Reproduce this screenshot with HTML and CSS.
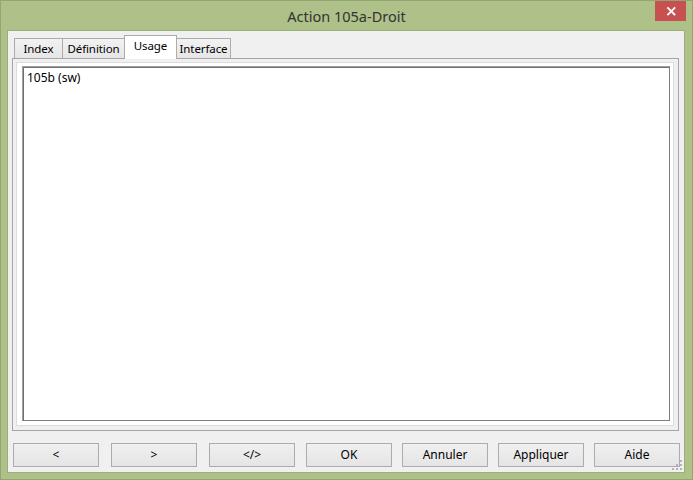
FILE: index.html
```html
<!DOCTYPE html>
<html lang="fr">
<head>
<meta charset="utf-8">
<title>Action 105a-Droit</title>
<link rel="stylesheet" href="styles.css">
</head>
<body>
<div class="window">
  <div class="titlebar">
    <span class="spacer"></span>
    <span class="title">Action 105a-Droit</span>
    <span class="close" aria-label="Fermer">
      <svg width="31" height="20" viewBox="0 0 31 20"><path d="M13 7 L19.5 13.5 M19.5 7 L13 13.5" stroke="#fff" stroke-width="1.8" fill="none" stroke-linecap="square"/></svg>
    </span>
  </div>
  <div class="client">
    <div class="tabs">
      <div class="tab t-index">Index</div>
      <div class="tab t-def">Définition</div>
      <div class="tab t-usage selected">Usage</div>
      <div class="tab t-iface">Interface</div>
    </div>
    <div class="panel">
      <div class="frame">
        <div class="listbox">
          <div class="item">105b (sw)</div>
        </div>
      </div>
    </div>
    <div class="buttons">
      <button class="btn">&lt;</button>
      <button class="btn">&gt;</button>
      <button class="btn">&lt;/&gt;</button>
      <button class="btn">OK</button>
      <button class="btn">Annuler</button>
      <button class="btn">Appliquer</button>
      <button class="btn">Aide</button>
    </div>
    <svg class="grip" width="12" height="12" viewBox="0 0 12 12">
      <g fill="#b4b4b4">
        <rect x="9" y="1" width="2" height="2"/>
        <rect x="9" y="5" width="2" height="2"/>
        <rect x="5" y="5" width="2" height="2"/>
        <rect x="9" y="9" width="2" height="2"/>
        <rect x="5" y="9" width="2" height="2"/>
        <rect x="1" y="9" width="2" height="2"/>
      </g>
    </svg>
  </div>
</div>
</body>
</html>
```
FILE: styles.css
```css
* { box-sizing: border-box; }
html, body { margin: 0; padding: 0; }
body {
  width: 693px;
  height: 480px;
  overflow: hidden;
  font-family: "Noto Sans", "Open Sans", sans-serif;
  font-size: 12px;
  color: #000;
}
.window {
  width: 693px;
  height: 480px;
  background: #adc189;
  box-shadow: inset 0 0 0 1px #93a670;
  display: flex;
  flex-direction: column;
}
.titlebar {
  height: 30px;
  display: grid;
  grid-template-columns: 1fr auto 1fr;
  align-items: center;
}
.title {
  font-size: 14.5px;
  color: #333;
  padding-top: 1px;
}
.close {
  justify-self: end;
  align-self: start;
  margin-top: 1px;
  margin-right: 7px;
  width: 31px;
  height: 20px;
  background: #c75050;
  display: block;
}
.close svg { display: block; }
.client {
  position: relative;
  width: 678px;
  height: 443px;
  margin-left: 7px;
  background: #f0f0f0;
  border: 1px solid #9cae7a;
  display: flex;
  flex-direction: column;
}
.tabs {
  margin-top: 4px;
  height: 23px;
  padding-left: 6px;
  display: flex;
  align-items: flex-end;
  position: relative;
  z-index: 2;
}
.tab {
  height: 20px;
  line-height: 19px;
  border: 1px solid #acacac;
  border-bottom: none;
  background: linear-gradient(#f2f2f2, #e6e6e6);
  text-align: center;
  white-space: nowrap;
  font-size: 11.5px;
  letter-spacing: -0.1px;
}
.tab + .tab { margin-left: -1px; }
.t-index { width: 49px; }
.t-def { width: 63px; }
.t-usage { width: 53px; }
.t-iface { width: 55px; }
.tab.selected {
  height: 24px;
  line-height: 20px;
  margin-bottom: -1px;
  background: #fff;
  position: relative;
  z-index: 3;
}
.panel {
  margin-left: 4px;
  width: 667px;
  height: 373px;
  border: 1px solid #a5a5a5;
  background: #f0f0f0;
  padding: 3px 4px 4px 3px;
  display: flex;
}
.frame {
  flex: 1;
  border: 1px solid #dcdcdc;
  background: #fff;
  padding: 3px 3px 4px 5px;
  display: flex;
}
.listbox {
  flex: 1;
  background: #fff;
  border: 1px solid #a0a0a0;
  border-right-color: #7e7e7e;
  border-bottom-color: #7e7e7e;
  box-shadow: inset 1px 1px 0 #6f6f6f;
  padding: 3px 3px;
}
.item {
  line-height: 15px;
  padding-left: 1px;
}
.buttons {
  margin-top: 12px;
  height: 24px;
  padding: 0 0 0 5px;
  display: flex;
}
.btn {
  width: 86px;
  height: 24px;
  border: 1px solid #acacac;
  background: linear-gradient(#f0f0f0, #e5e5e5);
  font-family: "Noto Sans", "Open Sans", sans-serif;
  font-size: 12px;
  color: #000;
  padding: 0;
  margin: 0;
  line-height: 20px;
}
.btn:nth-child(2), .btn:nth-child(3) { margin-left: 12px; }
.btn:nth-child(4) { margin-left: 11px; }
.btn:nth-child(n+5) { margin-left: 10px; }
.grip {
  position: absolute;
  right: 1px;
  bottom: 1px;
}
```
